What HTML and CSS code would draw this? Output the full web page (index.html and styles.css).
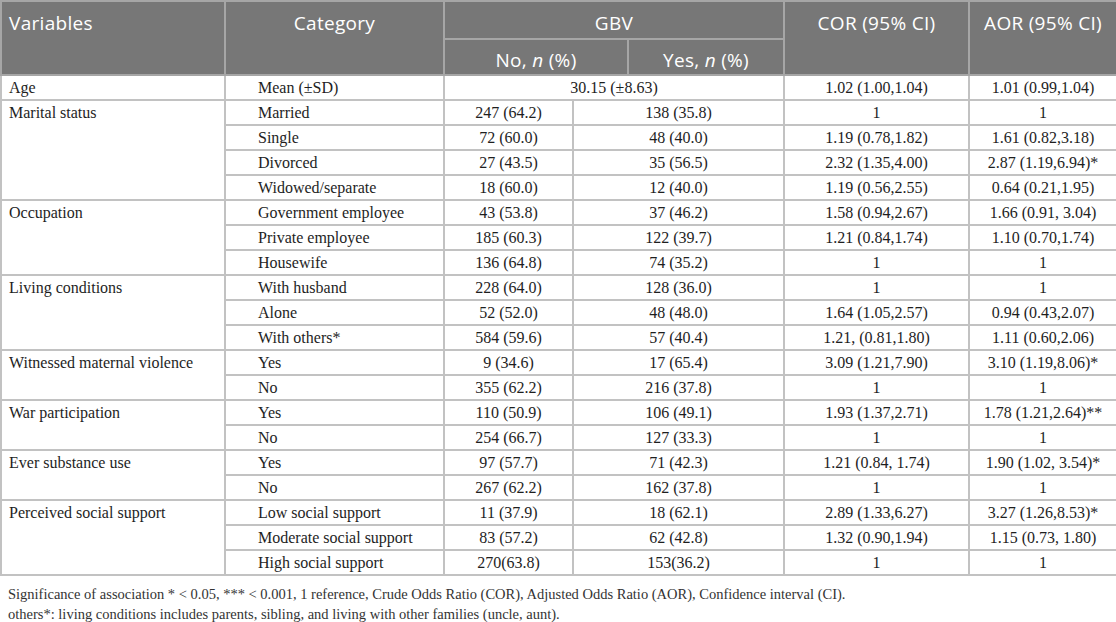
FILE: index.html
```html
<!DOCTYPE html>
<html lang="en">
<head>
    <meta charset="UTF-8">
    <title>GBV associated factors</title>
    <link rel="stylesheet" href="styles.css">
</head>
<body>
    <table class="gbv-table">
        <colgroup>
            <col class="c-var">
            <col class="c-cat">
            <col class="c-no">
            <col class="c-mid">
            <col class="c-yes">
            <col class="c-cor">
            <col class="c-aor">
        </colgroup>
        <thead>
            <tr class="h1">
                <th rowspan="2" class="left">Variables</th>
                <th rowspan="2">Category</th>
                <th colspan="3">GBV</th>
                <th rowspan="2">COR (95% CI)</th>
                <th rowspan="2">AOR (95% CI)</th>
            </tr>
            <tr class="h2">
                <th colspan="2">No, <i>n</i> (%)</th>
                <th>Yes, <i>n</i> (%)</th>
            </tr>
        </thead>
        <tbody>
            <tr>
                <td class="var">Age</td>
                <td class="cat">Mean (±SD)</td>
                <td colspan="3">30.15 (±8.63)</td>
                <td>1.02 (1.00,1.04)</td>
                <td>1.01 (0.99,1.04)</td>
            </tr>

            <!-- Marital status -->
            <tr>
                <td class="var" rowspan="4">Marital status</td>
                <td class="cat">Married</td>
                <td>247 (64.2)</td>
                <td colspan="2">138 (35.8)</td>
                <td>1</td>
                <td>1</td>
            </tr>
            <tr>
                <td class="cat">Single</td>
                <td>72 (60.0)</td>
                <td colspan="2">48 (40.0)</td>
                <td>1.19 (0.78,1.82)</td>
                <td>1.61 (0.82,3.18)</td>
            </tr>
            <tr>
                <td class="cat">Divorced</td>
                <td>27 (43.5)</td>
                <td colspan="2">35 (56.5)</td>
                <td>2.32 (1.35,4.00)</td>
                <td>2.87 (1.19,6.94)*</td>
            </tr>
            <tr>
                <td class="cat">Widowed/separate</td>
                <td>18 (60.0)</td>
                <td colspan="2">12 (40.0)</td>
                <td>1.19 (0.56,2.55)</td>
                <td>0.64 (0.21,1.95)</td>
            </tr>

            <!-- Occupation -->
            <tr>
                <td class="var" rowspan="3">Occupation</td>
                <td class="cat">Government employee</td>
                <td>43 (53.8)</td>
                <td colspan="2">37 (46.2)</td>
                <td>1.58 (0.94,2.67)</td>
                <td>1.66 (0.91, 3.04)</td>
            </tr>
            <tr>
                <td class="cat">Private employee</td>
                <td>185 (60.3)</td>
                <td colspan="2">122 (39.7)</td>
                <td>1.21 (0.84,1.74)</td>
                <td>1.10 (0.70,1.74)</td>
            </tr>
            <tr>
                <td class="cat">Housewife</td>
                <td>136 (64.8)</td>
                <td colspan="2">74 (35.2)</td>
                <td>1</td>
                <td>1</td>
            </tr>

            <!-- Living conditions -->
            <tr>
                <td class="var" rowspan="3">Living conditions</td>
                <td class="cat">With husband</td>
                <td>228 (64.0)</td>
                <td colspan="2">128 (36.0)</td>
                <td>1</td>
                <td>1</td>
            </tr>
            <tr>
                <td class="cat">Alone</td>
                <td>52 (52.0)</td>
                <td colspan="2">48 (48.0)</td>
                <td>1.64 (1.05,2.57)</td>
                <td>0.94 (0.43,2.07)</td>
            </tr>
            <tr>
                <td class="cat">With others*</td>
                <td>584 (59.6)</td>
                <td colspan="2">57 (40.4)</td>
                <td>1.21, (0.81,1.80)</td>
                <td>1.11 (0.60,2.06)</td>
            </tr>

            <!-- Witnessed maternal violence -->
            <tr>
                <td class="var" rowspan="2">Witnessed maternal violence</td>
                <td class="cat">Yes</td>
                <td>9 (34.6)</td>
                <td colspan="2">17 (65.4)</td>
                <td>3.09 (1.21,7.90)</td>
                <td>3.10 (1.19,8.06)*</td>
            </tr>
            <tr>
                <td class="cat">No</td>
                <td>355 (62.2)</td>
                <td colspan="2">216 (37.8)</td>
                <td>1</td>
                <td>1</td>
            </tr>

            <!-- War participation -->
            <tr>
                <td class="var" rowspan="2">War participation</td>
                <td class="cat">Yes</td>
                <td>110 (50.9)</td>
                <td colspan="2">106 (49.1)</td>
                <td>1.93 (1.37,2.71)</td>
                <td>1.78 (1.21,2.64)**</td>
            </tr>
            <tr>
                <td class="cat">No</td>
                <td>254 (66.7)</td>
                <td colspan="2">127 (33.3)</td>
                <td>1</td>
                <td>1</td>
            </tr>

            <!-- Ever substance use -->
            <tr>
                <td class="var" rowspan="2">Ever substance use</td>
                <td class="cat">Yes</td>
                <td>97 (57.7)</td>
                <td colspan="2">71 (42.3)</td>
                <td>1.21 (0.84, 1.74)</td>
                <td>1.90 (1.02, 3.54)*</td>
            </tr>
            <tr>
                <td class="cat">No</td>
                <td>267 (62.2)</td>
                <td colspan="2">162 (37.8)</td>
                <td>1</td>
                <td>1</td>
            </tr>

            <!-- Perceived social support -->
            <tr>
                <td class="var" rowspan="3">Perceived social support</td>
                <td class="cat">Low social support</td>
                <td>11 (37.9)</td>
                <td colspan="2">18 (62.1)</td>
                <td>2.89 (1.33,6.27)</td>
                <td>3.27 (1.26,8.53)*</td>
            </tr>
            <tr>
                <td class="cat">Moderate social support</td>
                <td>83 (57.2)</td>
                <td colspan="2">62 (42.8)</td>
                <td>1.32 (0.90,1.94)</td>
                <td>1.15 (0.73, 1.80)</td>
            </tr>
            <tr>
                <td class="cat">High social support</td>
                <td>270(63.8)</td>
                <td colspan="2">153(36.2)</td>
                <td>1</td>
                <td>1</td>
            </tr>
        </tbody>
    </table>

    <div class="notes">
        <p>Significance of association * &lt; 0.05, *** &lt; 0.001, 1 reference, Crude Odds Ratio (COR), Adjusted Odds Ratio (AOR), Confidence interval (CI).</p>
        <p>others*: living conditions includes parents, sibling, and living with other families (uncle, aunt).</p>
    </div>
</body>
</html>
```

FILE: styles.css
```css
body {
    margin: 0;
    padding: 0;
    background: #fff;
    color: #1e1e1e;
    font-family: "Liberation Serif", "Times New Roman", serif;
}

.gbv-table {
    width: 1116px;
    border-collapse: collapse;
    table-layout: fixed;
}

.c-var { width: 224px; }
.c-cat { width: 219px; }
.c-no  { width: 129px; }
.c-mid { width: 55px; }
.c-yes { width: 156px; }
.c-cor { width: 185px; }
.c-aor { width: 148px; }

/* Шапка таблицы */
.gbv-table th {
    background: #777;
    color: #fff;
    font-family: "Open Sans", "Liberation Sans", sans-serif;
    font-weight: normal;
    font-size: 19px;
    letter-spacing: 0.3px;
    text-align: center;
    vertical-align: top;
    border: 2px solid #a6a6a6;
    padding: 8px 6px 0;
    line-height: 26px;
}

.gbv-table th.left {
    text-align: left;
    padding-left: 7px;
}

.gbv-table .h1 {
    height: 38px;
}

.gbv-table .h2 {
    height: 36px;
}

.gbv-table .h2 th {
    padding-top: 7px;
}

/* Строки данных */
.gbv-table td {
    font-size: 16px;
    height: 21px;
    line-height: 21px;
    padding: 1px 6px 1px;
    text-align: center;
    border: 2px solid #c2c2c2;
    white-space: nowrap;
}

.gbv-table td.var {
    text-align: left;
    vertical-align: top;
    padding-left: 7px;
}

.gbv-table td.cat {
    text-align: left;
    padding-left: 32px;
}

.notes {
    padding: 8px 8px 0;
    color: #333;
    font-size: 14.5px;
    line-height: 20px;
}

.notes p {
    margin: 0;
}
```
